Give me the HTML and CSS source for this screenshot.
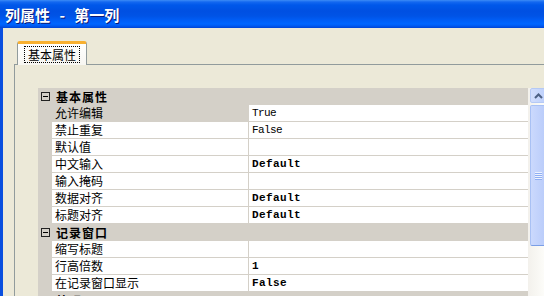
FILE: index.html
```html
<!DOCTYPE html>
<html lang="zh-CN">
<head>
<meta charset="UTF-8">
<title>列属性 - 第一列</title>
<link rel="stylesheet" href="styles.css">
</head>
<body>

<div class="titlebar"><span class="title">列属性 - 第一列</span></div>

<div class="frame">
    <div class="tabs">
        <div class="tab active"><span class="tab-label">基本属性</span></div>
    </div>

    <div class="panel">
        <div class="propgrid">
            <div class="rows">
                <div class="cat"><span class="toggle"></span><span class="cat-name">基本属性</span></div>
                <div class="row selected"><span class="name">允许编辑</span><span class="value">True</span></div>
                <div class="row"><span class="name">禁止重复</span><span class="value">False</span></div>
                <div class="row"><span class="name">默认值</span><span class="value"></span></div>
                <div class="row"><span class="name">中文输入</span><span class="value bold">Default</span></div>
                <div class="row"><span class="name">输入掩码</span><span class="value"></span></div>
                <div class="row"><span class="name">数据对齐</span><span class="value bold">Default</span></div>
                <div class="row"><span class="name">标题对齐</span><span class="value bold">Default</span></div>

                <div class="cat"><span class="toggle"></span><span class="cat-name">记录窗口</span></div>
                <div class="row"><span class="name">缩写标题</span><span class="value"></span></div>
                <div class="row"><span class="name">行高倍数</span><span class="value bold">1</span></div>
                <div class="row"><span class="name">在记录窗口显示</span><span class="value bold">False</span></div>

                <div class="cat"><span class="toggle"></span><span class="cat-name">外观</span></div>
            </div>

            <div class="scrollbar">
                <div class="sb-button">
                    <svg width="9" height="6" viewBox="0 0 9 6"><path d="M1 5 L4.5 1.5 L8 5" fill="none" stroke="#4D6185" stroke-width="2"/></svg>
                </div>
                <div class="sb-thumb"><span class="grip"></span></div>
            </div>
        </div>
    </div>
</div>

</body>
</html>
```

FILE: styles.css
```css
html, body { margin: 0; padding: 0; height: 100%; overflow: hidden; }
body { background-color: #ECE9D8; font-family: "Noto Sans CJK SC", "Noto Sans", sans-serif; font-size: 12px; color: #000; }

/* window caption */
.titlebar {
    height: 28px;
    display: flex;
    align-items: center;
    padding-left: 5px;
    background: linear-gradient(to bottom, #3D8CF6 0px, #1468F0 2px, #0058EA 5px, #0050E2 11px, #0053E6 16px, #005FF8 21px, #0066FF 24px, #0059F0 26px, #0043D4 28px);
}
.title { color: #fff; font-weight: bold; font-size: 15px; word-spacing: 6px; text-shadow: 1px 1px 0 #0A1A7A; }

.frame { border-left: 3px solid #0A4FDF; height: 268px; padding: 13px 0 0 11px; box-sizing: border-box; overflow: hidden; }

/* tab strip */
.tabs { display: flex; padding-left: 3px; }
.tab {
    position: relative;
    z-index: 1;
    width: 70px;
    height: 24px;
    margin-bottom: -1px;
    box-sizing: border-box;
    display: flex;
    justify-content: center;
    padding-top: 2px;
    border: 1px solid #919B9C;
    border-top: 3px solid #F8B030;
    border-bottom: none;
    border-radius: 3px 3px 0 0;
    background: linear-gradient(to bottom, #FFFFFF, #F7F6F1);
}
.tab-label { border: 1px dotted #000; padding: 0 3px; height: 15px; line-height: 15px; }

.panel { border-top: 1px solid #919B9C; border-left: 1px solid #919B9C; padding: 23px 0 0 23px; height: 208px; overflow: hidden; }

/* property grid */
.propgrid { display: flex; width: 511px; }
.rows { width: 490px; background: #D4D0C8; }

.cat { height: 17px; display: flex; align-items: center; }
.toggle { position: relative; width: 9px; height: 9px; box-sizing: border-box; border: 1px solid #222; margin-left: 3px; }
.toggle::after { content: ""; position: absolute; left: 1px; top: 3px; width: 5px; height: 1px; background: #000; }
.cat-name { margin-left: 6px; font-weight: bold; letter-spacing: 1px; line-height: 17px; }

.row { display: flex; height: 17px; padding-left: 14px; }
.name, .value { box-sizing: border-box; height: 17px; line-height: 16px; background: #fff; border-bottom: 1px solid #D4D0C8; padding-left: 3px; white-space: nowrap; }
.name { width: 197px; border-right: 1px solid #D4D0C8; }
.value { flex: 1; font-family: "Liberation Mono", monospace; font-size: 11px; letter-spacing: -0.6px; }
.value.bold { font-weight: bold; letter-spacing: 0.4px; }
.row.selected .name { background: #D4D0C8; }

/* scrollbar */
.scrollbar { width: 19px; height: 210px; box-sizing: border-box; padding-left: 2px; background: linear-gradient(to right, #F3F1EC, #FEFEFB); }
.sb-button {
    height: 15px;
    box-sizing: border-box;
    border: 1px solid #B5C9F5;
    border-radius: 2px;
    background: linear-gradient(to right, #D2DEFD, #BCCFFB);
    display: flex;
    justify-content: center;
    align-items: center;
}
.sb-thumb {
    height: 141px;
    margin-top: 2px;
    box-sizing: border-box;
    border: 1px solid #A9C1F4;
    border-bottom-color: #7A9EE6;
    border-radius: 2px;
    background: linear-gradient(to right, #CBD9FD, #B8CBFA);
    display: flex;
    justify-content: center;
    align-items: center;
}
.grip { width: 7px; height: 8px; background: repeating-linear-gradient(to bottom, #EEF3FE 0, #EEF3FE 1px, #8EAEF3 1px, #8EAEF3 2px); }
```
